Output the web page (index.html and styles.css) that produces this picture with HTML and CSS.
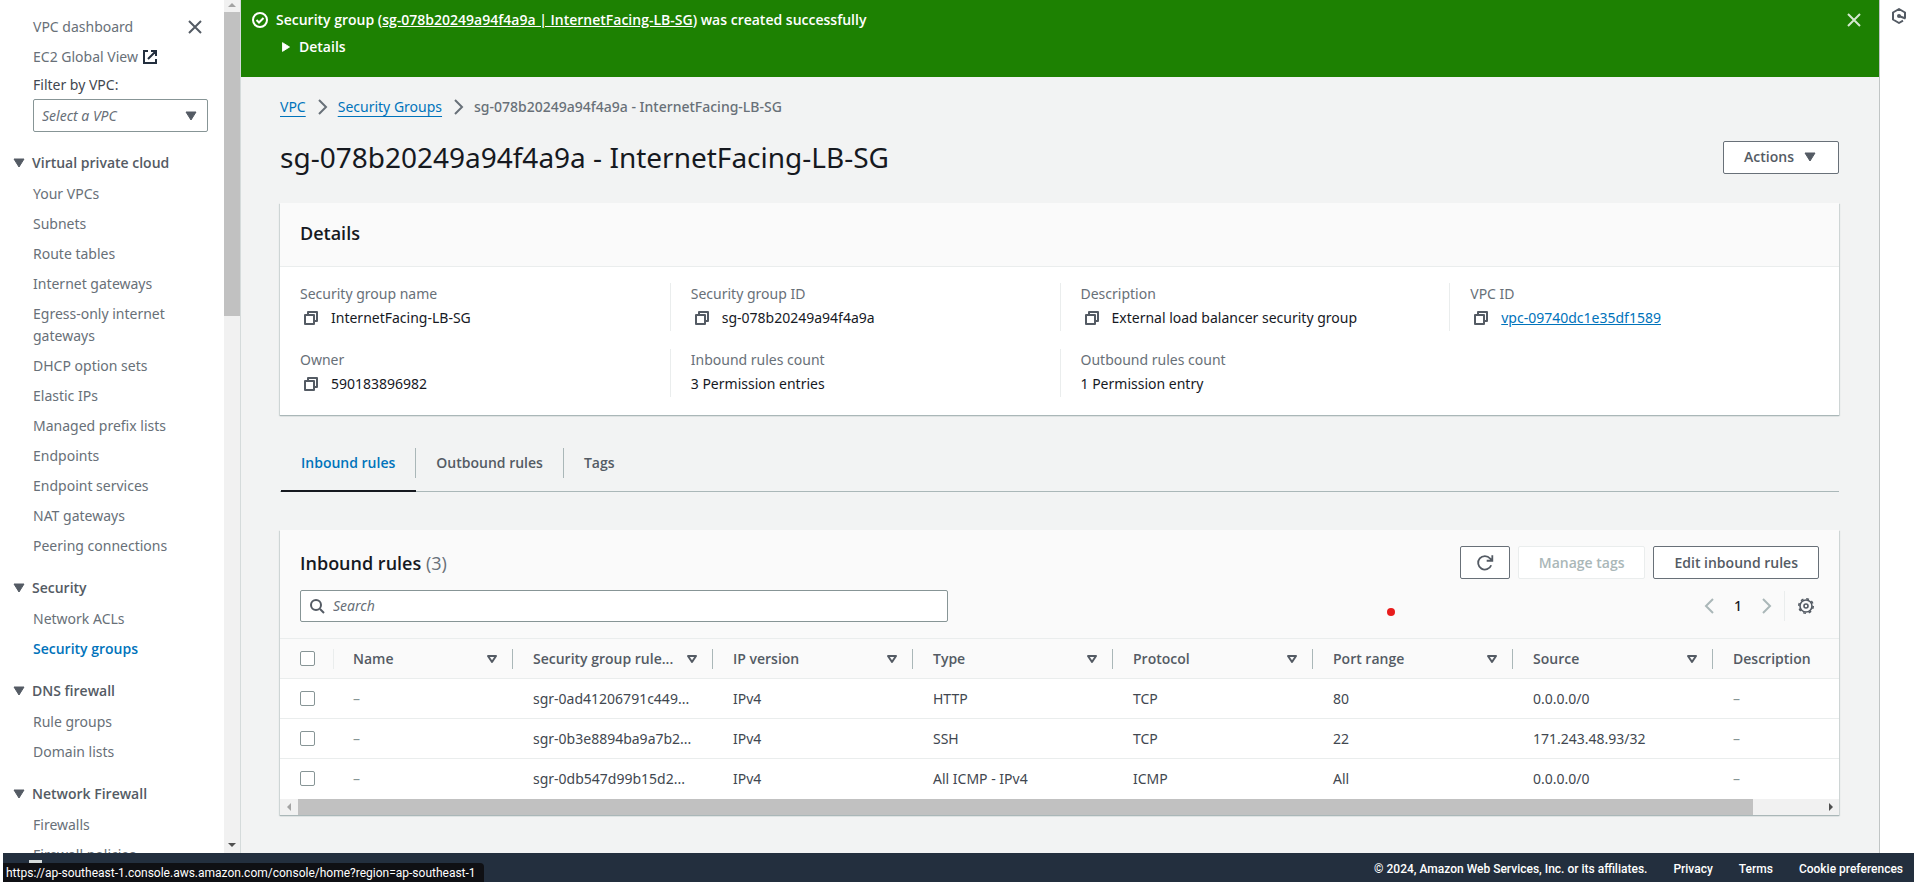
FILE: index.html
```html
<!DOCTYPE html>
<html lang="en">
<head>
<meta charset="utf-8">
<title>Security group | VPC Console</title>
<link rel="stylesheet" href="styles.css">
</head>
<body>
<svg class="sprite" aria-hidden="true">
  <symbol id="i-close" viewBox="0 0 16 16"><path d="M2 2l12 12M14 2L2 14" fill="none" stroke="currentColor" stroke-width="2"/></symbol>
  <symbol id="i-copy" viewBox="0 0 16 16"><path d="M2 5h9v9H2zM5 5V2h9v9h-3" fill="none" stroke="currentColor" stroke-width="2" stroke-linejoin="round"/></symbol>
  <symbol id="i-down" viewBox="0 0 16 16"><path d="M3 4h10l-5 8z" fill="currentColor" stroke="currentColor" stroke-linejoin="round"/></symbol>
  <symbol id="i-filter" viewBox="0 0 16 16"><path d="M4 5h8l-4 6z" fill="none" stroke="currentColor" stroke-width="2" stroke-linejoin="round"/></symbol>
  <symbol id="i-right" viewBox="0 0 16 16"><path d="M5 1l7 7-7 7" fill="none" stroke="currentColor" stroke-width="2"/></symbol>
  <symbol id="i-left" viewBox="0 0 16 16"><path d="M11 1L4 8l7 7" fill="none" stroke="currentColor" stroke-width="2"/></symbol>
</svg>

<div class="app">
  <nav class="sidebar" aria-label="VPC">
    <div class="nav">
      <div class="nav-top">
        <a href="#">VPC dashboard</a>
        <button class="icon-btn" aria-label="Close navigation"><svg class="icon"><use href="#i-close"/></svg></button>
      </div>
      <a class="global" href="#">EC2 Global View
        <svg class="icon dark" viewBox="0 0 16 16"><path d="M6 2H2v12h12v-4M9 2h5v5M14 2L6 10" fill="none" stroke="currentColor" stroke-width="2"/></svg>
      </a>
      <label class="filter-label" for="vpc">Filter by VPC:</label>
      <div class="select">
        <select id="vpc"><option>Select a VPC</option></select>
        <svg class="icon"><use href="#i-down"/></svg>
      </div>

      <section>
        <h2><svg class="icon"><use href="#i-down"/></svg>Virtual private cloud</h2>
        <ul>
          <li><a href="#">Your VPCs</a></li>
          <li><a href="#">Subnets</a></li>
          <li><a href="#">Route tables</a></li>
          <li><a href="#">Internet gateways</a></li>
          <li><a href="#">Egress-only internet gateways</a></li>
          <li><a href="#">DHCP option sets</a></li>
          <li><a href="#">Elastic IPs</a></li>
          <li><a href="#">Managed prefix lists</a></li>
          <li><a href="#">Endpoints</a></li>
          <li><a href="#">Endpoint services</a></li>
          <li><a href="#">NAT gateways</a></li>
          <li><a href="#">Peering connections</a></li>
        </ul>
      </section>
      <section>
        <h2><svg class="icon"><use href="#i-down"/></svg>Security</h2>
        <ul>
          <li><a href="#">Network ACLs</a></li>
          <li><a class="current" href="#" aria-current="page">Security groups</a></li>
        </ul>
      </section>
      <section>
        <h2><svg class="icon"><use href="#i-down"/></svg>DNS firewall</h2>
        <ul>
          <li><a href="#">Rule groups</a></li>
          <li><a href="#">Domain lists</a></li>
        </ul>
      </section>
      <section>
        <h2><svg class="icon"><use href="#i-down"/></svg>Network Firewall</h2>
        <ul>
          <li><a href="#">Firewalls</a></li>
          <li><a href="#">Firewall policies</a></li>
        </ul>
      </section>
    </div>
    <div class="vscroll" aria-hidden="true">
      <svg viewBox="0 0 16 12"><path d="M4 7l4-4 4 4z" fill="#a3a3a3"/></svg>
      <div class="vthumb"></div>
      <svg class="end" viewBox="0 0 16 12"><path d="M4 2h8l-4 4z" fill="#505050"/></svg>
    </div>
  </nav>

  <main class="main">
    <div class="flash" role="status">
      <svg class="icon ok" viewBox="0 0 16 16"><circle cx="8" cy="8" r="7" fill="none" stroke="currentColor" stroke-width="2"/><path d="M4.500 8l2.500 2.500 4.500-4.500" fill="none" stroke="currentColor" stroke-width="2"/></svg>
      <div class="flash-body">
        <p>Security group (<a href="#">sg-078b20249a94f4a9a | InternetFacing-LB-SG</a>) was created successfully</p>
        <button class="flash-details"><svg viewBox="0 0 16 16"><path d="M4 3v10l8-5z" fill="currentColor" stroke="currentColor" stroke-linejoin="round"/></svg>Details</button>
      </div>
      <button class="icon-btn pale" aria-label="Dismiss"><svg class="icon"><use href="#i-close"/></svg></button>
    </div>

    <div class="content">
      <nav class="crumbs" aria-label="Breadcrumb">
        <a href="#">VPC</a>
        <svg class="icon"><use href="#i-right"/></svg>
        <a href="#">Security Groups</a>
        <svg class="icon"><use href="#i-right"/></svg>
        <span>sg-078b20249a94f4a9a - InternetFacing-LB-SG</span>
      </nav>
      <header class="title">
        <h1>sg-078b20249a94f4a9a - InternetFacing-LB-SG</h1>
        <button class="btn">Actions <svg class="icon"><use href="#i-down"/></svg></button>
      </header>

      <section class="panel">
        <h2 class="panel-head">Details</h2>
        <dl class="facts">
          <div><dt>Security group name</dt><dd class="copy"><svg class="icon"><use href="#i-copy"/></svg>InternetFacing-LB-SG</dd></div>
          <div><dt>Security group ID</dt><dd class="copy"><svg class="icon"><use href="#i-copy"/></svg>sg-078b20249a94f4a9a</dd></div>
          <div><dt>Description</dt><dd class="copy"><svg class="icon"><use href="#i-copy"/></svg>External load balancer security group</dd></div>
          <div><dt>VPC ID</dt><dd class="copy"><svg class="icon"><use href="#i-copy"/></svg><a href="#">vpc-09740dc1e35df1589</a></dd></div>
          <div><dt>Owner</dt><dd class="copy"><svg class="icon"><use href="#i-copy"/></svg>590183896982</dd></div>
          <div><dt>Inbound rules count</dt><dd>3 Permission entries</dd></div>
          <div><dt>Outbound rules count</dt><dd>1 Permission entry</dd></div>
        </dl>
      </section>

      <div class="tabs" role="tablist">
        <button role="tab" aria-selected="true"><span>Inbound rules</span></button>
        <button role="tab" aria-selected="false"><span>Outbound rules</span></button>
        <button role="tab" aria-selected="false"><span>Tags</span></button>
      </div>

      <section class="panel rules">
        <div class="rules-head">
          <div class="bar">
            <h2>Inbound rules <span>(3)</span></h2>
            <div class="actions">
              <button class="btn square" aria-label="Refresh"><svg class="icon big" viewBox="0 0 16 16"><path d="M13.500 10A6 6 0 1 1 12.500 4L14 5.500M14.500 1v5h-5" fill="none" stroke="currentColor" stroke-width="1.600"/></svg></button>
              <button class="btn" disabled>Manage tags</button>
              <button class="btn">Edit inbound rules</button>
            </div>
          </div>
          <div class="bar">
            <div class="search">
              <svg class="icon" viewBox="0 0 16 16"><circle cx="7" cy="7" r="5" fill="none" stroke="currentColor" stroke-width="2"/><path d="M11 11l4 4" stroke="currentColor" stroke-width="2"/></svg>
              <input type="search" placeholder="Search" aria-label="Search">
            </div>
            <div class="pager">
              <button aria-label="Previous page"><svg class="icon"><use href="#i-left"/></svg></button>
              <span>1</span>
              <button aria-label="Next page"><svg class="icon"><use href="#i-right"/></svg></button>
              <button class="gear" aria-label="Preferences"><svg class="icon" viewBox="0 0 16 16"><circle cx="8" cy="8" r="6" fill="none" stroke="currentColor" stroke-width="1.600"/><circle cx="8" cy="8" r="7.200" fill="none" stroke="currentColor" stroke-width="1.600" stroke-dasharray="2.800 2.855"/><circle cx="8" cy="8" r="2" fill="none" stroke="currentColor" stroke-width="1.600"/></svg></button>
            </div>
          </div>
        </div>
        <div class="table-wrap">
          <table>
            <colgroup><col class="c-check"><col class="c-name"><col><col><col><col><col><col><col></colgroup>
            <thead>
              <tr>
                <th><input type="checkbox" aria-label="Select all"></th>
                <th><div><span>Name</span><svg class="icon"><use href="#i-filter"/></svg></div></th>
                <th><div><span>Security group rule...</span><svg class="icon"><use href="#i-filter"/></svg></div></th>
                <th><div><span>IP version</span><svg class="icon"><use href="#i-filter"/></svg></div></th>
                <th><div><span>Type</span><svg class="icon"><use href="#i-filter"/></svg></div></th>
                <th><div><span>Protocol</span><svg class="icon"><use href="#i-filter"/></svg></div></th>
                <th><div><span>Port range</span><svg class="icon"><use href="#i-filter"/></svg></div></th>
                <th><div><span>Source</span><svg class="icon"><use href="#i-filter"/></svg></div></th>
                <th><div><span>Description</span></div></th>
              </tr>
            </thead>
            <tbody>
              <tr><td><input type="checkbox" aria-label="Select HTTP rule"></td><td>–</td><td>sgr-0ad41206791c449...</td><td>IPv4</td><td>HTTP</td><td>TCP</td><td>80</td><td>0.0.0.0/0</td><td>–</td></tr>
              <tr><td><input type="checkbox" aria-label="Select SSH rule"></td><td>–</td><td>sgr-0b3e8894ba9a7b2...</td><td>IPv4</td><td>SSH</td><td>TCP</td><td>22</td><td>171.243.48.93/32</td><td>–</td></tr>
              <tr><td><input type="checkbox" aria-label="Select ICMP rule"></td><td>–</td><td>sgr-0db547d99b15d2...</td><td>IPv4</td><td>All ICMP - IPv4</td><td>ICMP</td><td>All</td><td>0.0.0.0/0</td><td>–</td></tr>
            </tbody>
          </table>
        </div>
        <div class="hscroll" aria-hidden="true">
          <svg viewBox="0 0 18 16"><path d="M11 4v8l-4-4z" fill="#a3a3a3"/></svg>
          <div class="htrack"><div class="hthumb"></div></div>
          <svg viewBox="0 0 18 16"><path d="M8 4v8l4-4z" fill="#505050"/></svg>
        </div>
        <i class="pointer"></i>
      </section>
    </div>
  </main>

  <aside class="rail">
    <button class="icon-btn" aria-label="Open tools panel"><svg class="icon" viewBox="0 0 16 16"><path d="M14 10.500V4.500L8 1 2 4.500v7L8 15l4-2.300M8 8l6.500 2.500" fill="none" stroke="currentColor" stroke-width="2" stroke-linejoin="round"/><circle cx="8" cy="8" r="2" fill="currentColor"/></svg></button>
  </aside>
</div>

<footer class="footer">
  <span class="shell"></span>
  <span>© 2024, Amazon Web Services, Inc. or its affiliates.</span>
  <a href="#">Privacy</a>
  <a href="#">Terms</a>
  <a href="#">Cookie preferences</a>
  <div class="status-url">https://ap-southeast-1.console.aws.amazon.com/console/home?region=ap-southeast-1</div>
</footer>
</body>
</html>
```
FILE: styles.css
```css
* { box-sizing: border-box; }

body {
  margin: 0;
  height: 100vh;
  padding-bottom: 2px;
  display: flex;
  flex-direction: column;
  overflow: hidden;
  background: #fff;
  color: #16191f;
  font: 14px/22px "Noto Sans", "Open Sans", sans-serif;
}

h1, h2, p, ul, dl, dd { margin: 0; padding: 0; }
ul { list-style: none; }
button { margin: 0; padding: 0; border: 0; background: none; color: inherit; font: inherit; }
a { color: #0073bb; }

.sprite { display: none; }
.icon { width: 16px; height: 16px; flex: none; display: block; }
.dark { color: #232f3e; }
.icon-btn { display: flex; color: #545b64; }
.pale { color: #d5e8d0; }

.app { flex: 1; min-height: 0; display: flex; }

/* Side navigation */
.sidebar {
  width: 241px;
  flex: none;
  display: flex;
  border-right: 1px solid #d5dbdb;
  color: #545b64;
}
.nav { flex: 1; overflow: hidden; padding: 16px 16px 0 33px; }
.nav a { color: #687078; text-decoration: none; }
.nav-top { display: flex; justify-content: space-between; align-items: center; padding-right: 5px; }
.nav .global { display: flex; align-items: center; gap: 4px; margin-top: 8px; }
.filter-label { display: block; margin-top: 6px; color: #414750; }
.select { display: flex; align-items: center; margin-top: 3px; position: relative; }
.select select {
  appearance: none;
  width: 100%;
  height: 33px;
  padding: 0 8px;
  border: 1px solid #879596;
  border-radius: 2px;
  background: #fff;
  color: #687078;
  font: italic 14px/22px "Noto Sans", "Open Sans", sans-serif;
}
.select .icon { position: absolute; right: 9px; pointer-events: none; color: #545b64; }
.nav section { margin-top: 20px; }
.nav h2 { display: flex; align-items: center; gap: 5px; margin-left: -22px; font: 600 14px/22px "Open Sans", sans-serif; color: #545b64; }
.nav ul { display: flex; flex-direction: column; gap: 8px; margin-top: 9px; }
.nav li { display: flex; width: 150px; }
.nav .current { color: #0073bb; font: 600 14px/22px "Open Sans", sans-serif; }

.vscroll { width: 16px; flex: none; display: flex; flex-direction: column; background: #f1f1f1; }
.vscroll svg { height: 12px; flex: none; }
.vscroll .end { margin-top: auto; }
.vthumb { height: 304px; background: #c1c1c1; }

/* Main column */
.main { flex: 1; min-width: 0; background: #f2f3f3; }
.flash {
  display: flex;
  align-items: flex-start;
  gap: 8px;
  height: 77px;
  padding: 12px 17px 0 11px;
  background: #1d8102;
  color: #fff;
}
.flash-body { flex: 1; margin-top: -3px; font: 600 14px/22px "Open Sans", sans-serif; }
.flash-body a { color: #fff; }
.flash-details { display: flex; align-items: center; gap: 6px; margin: 5px 0 0 3px; }
.flash-details svg { width: 14px; height: 14px; }

.content { padding: 19px 40px 0 39px; }
.crumbs { display: flex; align-items: center; gap: 8px; color: #687078; font-weight: 500; }
.crumbs a { font-weight: 400; text-underline-offset: 4px; }
.title { display: flex; justify-content: space-between; align-items: center; margin-top: 20px; padding-bottom: 27px; }
h1 { font: 400 28px/38px "Noto Sans", "Open Sans", sans-serif; }

.btn {
  display: flex;
  align-items: center;
  gap: 8px;
  height: 33px;
  padding: 0 20px;
  border: 1px solid #687078;
  border-radius: 2px;
  background: #fff;
  color: #545b64;
  font: 600 14px/22px "Open Sans", sans-serif;
}
.btn:disabled { border-color: #eaeded; color: #aab7b8; }
.square { padding: 0 15px; }
.big { width: 18px; height: 18px; }

.panel { background: #fff; box-shadow: 0 1px 1px #aab7b8, 1px 1px 1px #d5dbdb, -1px 1px 1px #d5dbdb; }
.panel h2 { font: 600 18px/22px "Open Sans", sans-serif; }
.panel .panel-head { padding: 19px 20px 22px; background: #fafafa; border-bottom: 1px solid #eaeded; }
.facts { display: grid; grid-template-columns: repeat(4, 1fr); row-gap: 18px; padding: 16px 0 18px; }
.facts > div { height: 48px; padding: 0 20px; border-left: 1px solid #eaeded; }
.facts > div:nth-child(4n + 1) { border-left: 0; }
.facts dt { color: #687078; }
.facts dd { margin-top: 2px; }
.copy { display: flex; align-items: center; gap: 12px; padding-left: 3px; }
.copy .icon { color: #545b64; }

.tabs { display: flex; margin-top: 33px; padding-left: 1px; height: 44px; border-bottom: 1px solid #aab7b8; }
.tabs button { display: flex; align-items: flex-start; height: 44px; font: 600 14px/30px "Open Sans", sans-serif; color: #545b64; }
.tabs span { padding: 0 20px; border-right: 1px solid #aab7b8; }
.tabs button:last-child span { border: 0; }
.tabs [aria-selected="true"] { color: #0073bb; border-bottom: 2px solid #16191f; }

/* Rules table */
.rules { margin-top: 38px; position: relative; }
.rules-head { display: grid; gap: 11px; padding: 16px 20px; background: #fafafa; }
.bar { display: flex; align-items: center; justify-content: space-between; }
.bar h2 span { font-weight: 400; color: #687078; }
.actions { display: flex; gap: 8px; }
.search { display: flex; align-items: center; gap: 8px; width: 648px; height: 32px; padding: 0 8px; border: 1px solid #879596; border-radius: 2px; background: #fff; color: #545b64; }
.search input { flex: 1; min-width: 0; border: 0; outline: 0; padding: 0; background: none; font: inherit; }
.search input::placeholder { font-style: italic; color: #687078; }
.pager { display: flex; align-items: center; gap: 16px; font-weight: 500; }
.pager button { color: #aab7b8; }
.pager .gear { display: flex; align-items: center; height: 30px; padding: 0 5px 0 13px; margin-left: -6px; border-left: 1px solid #eaeded; color: #545b64; }

.table-wrap { overflow: hidden; }
table { width: 1633px; table-layout: fixed; border-collapse: collapse; }
.c-check { width: 53px; }
.c-name { width: 180px; }
th, td { height: 40px; padding: 0 20px; text-align: left; white-space: nowrap; border-top: 1px solid #eaeded; }
th { padding: 0; background: #fafafa; color: #545b64; font: 600 14px/22px "Open Sans", sans-serif; }
td { color: #414750; }
td:nth-child(2), td:nth-child(9) { color: #879596; }
th:first-child, td:first-child { padding: 0 0 0 20px; }
th div { display: flex; align-items: center; height: 20px; padding: 0 12px 0 20px; gap: 8px; border-right: 1px solid #aab7b8; }
th:nth-child(2) div { border-left: 1px solid #eaeded; padding-left: 19px; }
th:last-child div { border: 0; }
th span { flex: 1; min-width: 0; line-height: 22px; }
input[type="checkbox"] { appearance: none; display: block; width: 15px; height: 15px; margin: 0; border: 1px solid #879596; border-radius: 2px; background: #fff; }

.hscroll { display: flex; height: 16px; background: #f1f1f1; }
.hscroll svg { width: 18px; height: 16px; flex: none; }
.htrack { flex: 1; padding-right: 68px; }
.hthumb { height: 16px; background: #c1c1c1; }
.pointer { position: absolute; left: 71%; top: 78px; width: 8px; height: 8px; border-radius: 50%; background: #e81c1c; }

.rail { width: 35px; flex: none; display: flex; justify-content: center; align-items: flex-start; padding: 8px 0 0 4px; border-left: 1px solid #c1c5c5; }

/* Footer */
.footer {
  position: relative;
  flex: none;
  display: flex;
  justify-content: flex-end;
  gap: 26px;
  height: 29px;
  margin-left: 3px;
  padding: 5px 11px 0;
  background: #232f3e;
  color: #fff;
  font: 500 12px/22px Roboto, sans-serif;
}
.footer a { color: #fff; text-decoration: none; }
.shell { align-self: flex-start; width: 13px; height: 4px; margin: 2px auto 0 15px; background: #d5dbdb; }
.status-url {
  position: absolute;
  left: 0;
  bottom: 0;
  height: 19px;
  padding: 0 8px 0 3px;
  border-top-right-radius: 4px;
  background: #0f1014;
  font: 12px/20px Roboto, sans-serif;
  white-space: nowrap;
}
```
